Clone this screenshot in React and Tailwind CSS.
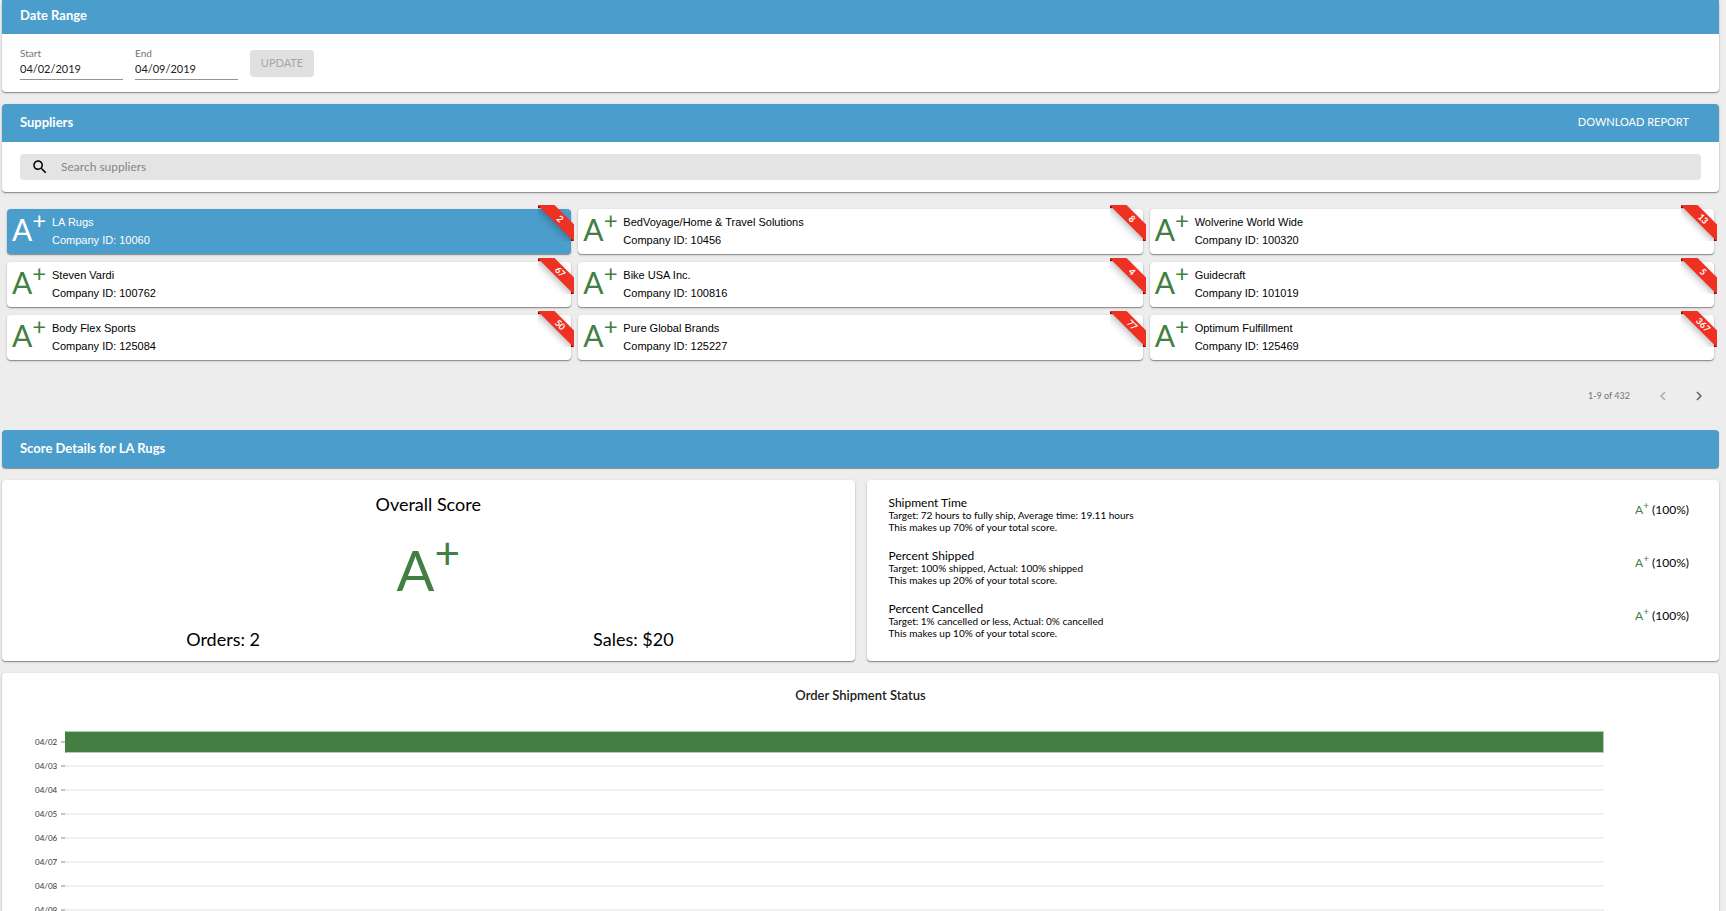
import { useState } from "react";

const suppliers = [
  { id: 10060, name: "LA Rugs", orders: 2 },
  { id: 10456, name: "BedVoyage/Home & Travel Solutions", orders: 8 },
  { id: 100320, name: "Wolverine World Wide", orders: 13 },
  { id: 100762, name: "Steven Vardi", orders: 67 },
  { id: 100816, name: "Bike USA Inc.", orders: 4 },
  { id: 101019, name: "Guidecraft", orders: 5 },
  { id: 125084, name: "Body Flex Sports", orders: 50 },
  { id: 125227, name: "Pure Global Brands", orders: 77 },
  { id: 125469, name: "Optimum Fulfillment", orders: 367 },
];

const metrics = [
  {
    title: "Shipment Time",
    detail: "Target: 72 hours to fully ship, Average time: 19.11 hours",
    weight: "This makes up 70% of your total score.",
  },
  {
    title: "Percent Shipped",
    detail: "Target: 100% shipped, Actual: 100% shipped",
    weight: "This makes up 20% of your total score.",
  },
  {
    title: "Percent Cancelled",
    detail: "Target: 1% cancelled or less, Actual: 0% cancelled",
    weight: "This makes up 10% of your total score.",
  },
];

const days = [
  { day: "04/02", percent: 100 },
  { day: "04/03", percent: 0 },
  { day: "04/04", percent: 0 },
  { day: "04/05", percent: 0 },
  { day: "04/06", percent: 0 },
  { day: "04/07", percent: 0 },
  { day: "04/08", percent: 0 },
  { day: "04/09", percent: 0 },
];

const Card = ({ className = "", children }) => (
  <section className={`rounded bg-white shadow-[0_1px_1px_#8c8c8c,0_1px_3px_rgba(0,0,0,0.15)] ${className}`}>
    {children}
  </section>
);

const DateField = ({ id, label, value, onChange }) => (
  <div className="flex w-[103px] flex-col border-b border-[#949494]">
    <label htmlFor={id} className="text-[10px] leading-3 text-[#757575]">
      {label}
    </label>
    <input
      id={id}
      type="text"
      value={value}
      onChange={(e) => onChange(e.target.value)}
      className="h-5 w-full pb-0.5 text-[11px] leading-4 text-[#212121] outline-none"
    />
  </div>
);

// =============================
// SUPPLIER TILE
// =============================
const Ribbon = ({ count }) => (
  <div className="absolute -top-1 -right-[3px] size-9 overflow-hidden">
    <span className="absolute top-0 left-0 size-[3px] bg-[#8f0808]" />
    <span className="absolute right-0 bottom-0 size-[3px] bg-[#8f0808]" />
    <span className="absolute top-2 -left-2 h-3 w-15 rotate-45 bg-[#ef3124] text-center text-[9px] leading-3 font-bold text-white shadow-[0_3px_10px_-3px_rgba(0,0,0,0.5)]">
      {count}
    </span>
  </div>
);

const SupplierTile = ({ supplier, active, onSelect }) => (
  <button
    type="button"
    onClick={() => onSelect(supplier)}
    className={`relative flex h-[45px] rounded pl-[5px] text-left shadow-[0_1px_1px_#8c8c8c,0_1px_3px_rgba(0,0,0,0.15)] ${
      active ? "bg-[#4b9dcb] text-white" : "bg-white text-black"
    }`}
  >
    <span className={`w-10 text-[30px] leading-10 ${active ? "text-white" : "text-[#437f43]"}`}>
      A<sup className="text-[24px]">+</sup>
    </span>
    <span className="flex flex-col pt-1 font-['Liberation_Sans',sans-serif] text-[11px] leading-[18px]">
      <span>{supplier.name}</span>
      <span>Company ID: {supplier.id}</span>
    </span>
    <Ribbon count={supplier.orders} />
  </button>
);

const App = () => {
  const [start, setStart] = useState("04/02/2019");
  const [end, setEnd] = useState("04/09/2019");
  const [search, setSearch] = useState("");
  const [selected, setSelected] = useState(suppliers[0]);

  return (
    <div className="flex min-h-screen flex-col gap-3 bg-[#ededed] pr-[7px] pl-[2px] font-[Lato,sans-serif] text-black">
      {/* Date Range */}
      <Card>
        <h2 className="h-[34px] bg-[#4b9dcb] px-[18px] text-[13px] leading-[30px] font-bold text-white">
          Date Range
        </h2>
        <form className="flex h-[58px] gap-3 px-[18px] pt-[13px] pb-3" onSubmit={(e) => e.preventDefault()}>
          <DateField id="start" label="Start" value={start} onChange={setStart} />
          <DateField id="end" label="End" value={end} onChange={setEnd} />
          <button
            type="submit"
            disabled
            className="mt-[3px] h-[27px] w-16 rounded-sm bg-[#e0e0e0] text-[11px] text-[#a6a6a6]"
          >
            UPDATE
          </button>
        </form>
      </Card>

      {/* Suppliers */}
      <Card>
        <div className="flex h-[38px] items-center justify-between rounded-t bg-[#4b9dcb] pr-[30px] pb-px pl-[18px] text-white">
          <h2 className="text-[13px] font-bold">Suppliers</h2>
          <button type="button" className="text-[11px]">
            DOWNLOAD REPORT
          </button>
        </div>
        <div className="px-[18px] py-3">
          <div className="flex h-[26px] items-center gap-3 rounded bg-[#e4e4e4] pl-[11px]">
            <svg viewBox="0 0 24 24" className="size-[18px] fill-black" aria-hidden="true">
              <path d="M15.5 14h-.79l-.28-.27C15.41 12.59 16 11.11 16 9.5 16 5.91 13.09 3 9.5 3S3 5.91 3 9.5 5.91 16 9.5 16c1.61 0 3.09-.59 4.23-1.57l.27.28v.79l5 4.99L20.49 19l-4.99-5zm-6 0C7.01 14 5 11.99 5 9.5S7.01 5 9.5 5 14 7.01 14 9.5 11.99 14 9.5 14z" />
            </svg>
            <input
              type="text"
              aria-label="Search suppliers"
              placeholder="Search suppliers"
              value={search}
              onChange={(e) => setSearch(e.target.value)}
              className="flex-1 text-[12px] outline-none placeholder:text-[#858585]"
            />
          </div>
        </div>
      </Card>

      {/* Supplier tiles */}
      <div className="grid grid-cols-3 gap-x-[7px] gap-y-2 px-[5px] pt-[5px]">
        {suppliers.map((s) => (
          <SupplierTile key={s.id} supplier={s} active={s.id === selected.id} onSelect={setSelected} />
        ))}
      </div>

      {/* Pagination */}
      <div className="flex h-[46px] items-center justify-end pt-0.5 pr-[11px] text-[9px] text-[#757575]">
        <span className="mr-6">1-9 of 432</span>
        <button type="button" disabled aria-label="Previous page" className="mr-[18px] text-[#ababab]">
          <svg viewBox="0 0 24 24" className="size-[18px] fill-current">
            <path d="M15.41 7.41L14 6l-6 6 6 6 1.41-1.41L10.83 12z" />
          </svg>
        </button>
        <button type="button" aria-label="Next page" className="text-[#616161]">
          <svg viewBox="0 0 24 24" className="size-[18px] fill-current">
            <path d="M10 6L8.59 7.41 13.17 12l-4.58 4.59L10 18l6-6z" />
          </svg>
        </button>
      </div>

      {/* Score details */}
      <h2 className="h-[38px] rounded bg-[#4b9dcb] px-[18px] text-[13px] leading-[36px] font-bold text-white shadow-[0_1px_1px_#8c8c8c]">
        Score Details for {selected.name}
      </h2>

      <div className="grid grid-cols-2 gap-3">
        <Card className="flex h-[181px] flex-col items-center pt-3 text-[18px] leading-6">
          <h3>Overall Score</h3>
          <div className="mt-6 text-[56px] leading-[60px] text-[#437f43]">
            A<sup className="text-[44px]">+</sup>
          </div>
          <div className="mt-auto mb-[10px] grid w-full grid-cols-2 px-4 text-center">
            <p>Orders: 2</p>
            <p>Sales: $20</p>
          </div>
        </Card>

        <Card className="flex h-[181px] flex-col gap-4 pt-4 pr-[30px] pl-[22px]">
          {metrics.map((m) => (
            <div key={m.title} className="flex items-start justify-between">
              <div className="text-[10px] leading-3">
                <h3 className="text-[12px] leading-[13px]">{m.title}</h3>
                <p>{m.detail}</p>
                <p>{m.weight}</p>
              </div>
              <p className="pt-1 text-[12px] leading-5">
                <span className="text-[#437f43]">
                  A<sup className="text-[10px]">+</sup>
                </span>{" "}
                (100%)
              </p>
            </div>
          ))}
        </Card>
      </div>

      {/* Order shipment status */}
      <Card className="flex-1 pt-3">
        <h3 className="text-center text-[13px] leading-5 font-semibold text-[#212121]">Order Shipment Status</h3>
        <div className="mt-[25px] pr-[115px] pl-[33px]">
          {days.map((d) => (
            <div key={d.day} className="flex h-6 items-center">
              <span className="w-[26px] text-[8px] text-[#333333]">{d.day}</span>
              <span className="h-[2px] w-1 bg-[#c4c4c4]" />
              {d.percent > 0 ? (
                <div className="flex-1">
                  <div
                    className="h-[22px] border border-[#b4ccb4] border-l-[#437f43] bg-[#437f43]"
                    style={{ width: `${d.percent}%` }}
                  />
                </div>
              ) : (
                <span className="h-[2px] flex-1 bg-[#f0f0f0]" />
              )}
            </div>
          ))}
        </div>
      </Card>
    </div>
  );
};

export default App;
